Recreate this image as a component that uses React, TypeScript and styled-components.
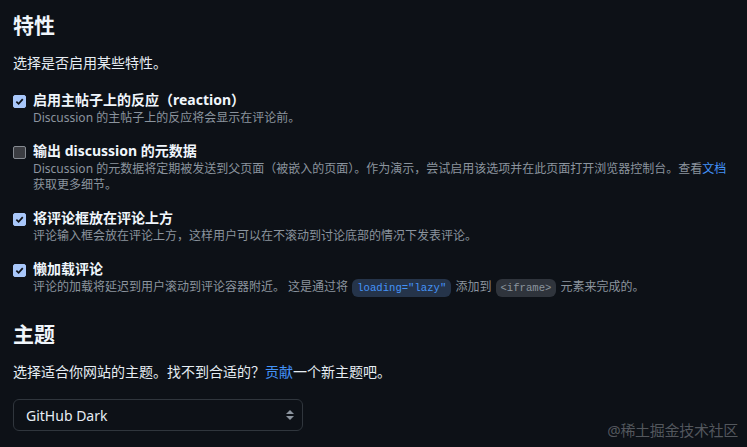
import styled, { createGlobalStyle } from 'styled-components';

const GlobalStyle = createGlobalStyle`
  html, body {
    margin: 0;
    background: #0d1117;
  }
  body {
    font-family: "Noto Sans", "Noto Sans CJK SC", sans-serif;
    color: #e6edf3;
    -webkit-font-smoothing: antialiased;
  }
`;

const Page = styled.div`
  position: relative;
  min-height: 447px;
  box-sizing: border-box;
  padding: 12px 14px 0 13px;
`;

const SectionTitle = styled.h2<{ $gap?: number }>`
  margin: ${(p) => p.$gap ?? 0}px 0 0;
  font-size: 21px;
  line-height: 26px;
  font-weight: 700;
  color: #f0f6fc;
`;

const Lead = styled.p`
  margin: 15px 0 0;
  font-size: 14px;
  line-height: 20px;
  color: #e6edf3;
`;

const Link = styled.a`
  color: #4493f8;
  text-decoration: none;
`;

const FeatureList = styled.div`
  display: flex;
  flex-direction: column;
  gap: 15px;
  margin-top: 17px;
`;

const Feature = styled.label`
  display: flex;
  align-items: flex-start;
  gap: 7px;
`;

const Box = styled.span<{ $checked?: boolean }>`
  flex: none;
  width: 13px;
  height: 13px;
  margin-top: 5px;
  box-sizing: border-box;
  border-radius: 2px;
  display: flex;
  align-items: center;
  justify-content: center;
  background: ${(p) => (p.$checked ? '#a8c7fa' : '#3b3d42')};
  border: 1px solid ${(p) => (p.$checked ? '#a8c7fa' : '#858a91')};
`;

const FeatureText = styled.div`
  display: flex;
  flex-direction: column;
`;

const FeatureLabel = styled.span`
  font-size: 14px;
  line-height: 20px;
  font-weight: 700;
  color: #f0f6fc;
`;

const FeatureDesc = styled.span`
  font-size: 12px;
  line-height: 16px;
  color: #8b949e;
`;

const Code = styled.code<{ $link?: boolean }>`
  font-family: "Liberation Mono", "DejaVu Sans Mono", monospace;
  font-size: 10.6px;
  padding: 3px 5px;
  margin: 0 1px;
  border-radius: 6px;
  background: ${(p) => (p.$link ? '#25344a' : '#2f343c')};
  color: ${(p) => (p.$link ? '#4493f8' : '#8b949e')};
`;

const SelectBox = styled.div`
  margin-top: 17px;
  width: 290px;
  height: 32px;
  box-sizing: border-box;
  border: 1px solid #30363d;
  border-radius: 6px;
  background: #0d1117;
  display: flex;
  align-items: center;
  justify-content: space-between;
  padding: 0 8px 0 12px;
  font-size: 14px;
  color: #e6edf3;
`;

const Watermark = styled.div`
  position: absolute;
  right: 9px;
  bottom: 8px;
  font-size: 15px;
  line-height: 18px;
  color: rgba(200, 205, 212, 0.38);
  letter-spacing: -0.3px;
`;

const Check = () => (
  <svg width="9" height="9" viewBox="0 0 10 10">
    <path d="M1.5 5.2 L4 7.6 L8.6 2.4" fill="none" stroke="#0d1117" strokeWidth="1.9" />
  </svg>
);

const features = [
  {
    checked: true,
    label: '启用主帖子上的反应（reaction）',
    desc: <>Discussion 的主帖子上的反应将会显示在评论前。</>,
  },
  {
    checked: false,
    label: '输出 discussion 的元数据',
    desc: (
      <>
        Discussion 的元数据将定期被发送到父页面（被嵌入的页面）。作为演示，尝试启用该选项并在此页面打开浏览器控制台。查看
        <Link href="#">文档</Link>获取更多细节。
      </>
    ),
  },
  {
    checked: true,
    label: '将评论框放在评论上方',
    desc: <>评论输入框会放在评论上方，这样用户可以在不滚动到讨论底部的情况下发表评论。</>,
  },
  {
    checked: true,
    label: '懒加载评论',
    desc: (
      <>
        评论的加载将延迟到用户滚动到评论容器附近。 这是通过将 <Code $link>loading="lazy"</Code> 添加到{' '}
        <Code>&lt;iframe&gt;</Code> 元素来完成的。
      </>
    ),
  },
];

export default function App() {
  return (
    <>
      <GlobalStyle />
      <Page>
        <SectionTitle>特性</SectionTitle>
        <Lead>选择是否启用某些特性。</Lead>
        <FeatureList>
          {features.map((f) => (
            <Feature key={f.label}>
              <Box $checked={f.checked}>{f.checked && <Check />}</Box>
              <FeatureText>
                <FeatureLabel>{f.label}</FeatureLabel>
                <FeatureDesc>{f.desc}</FeatureDesc>
              </FeatureText>
            </Feature>
          ))}
        </FeatureList>

        <SectionTitle $gap={25}>主题</SectionTitle>
        <Lead>
          选择适合你网站的主题。找不到合适的？<Link href="#">贡献</Link>一个新主题吧。
        </Lead>
        <SelectBox>
          <span>GitHub Dark</span>
          <svg width="8" height="12" viewBox="0 0 8 12">
            <polygon points="0,5 4,1 8,5" fill="#8b949e" />
            <polygon points="0,7 4,11 8,7" fill="#8b949e" />
          </svg>
        </SelectBox>
        <Watermark>@稀土掘金技术社区</Watermark>
      </Page>
    </>
  );
}
